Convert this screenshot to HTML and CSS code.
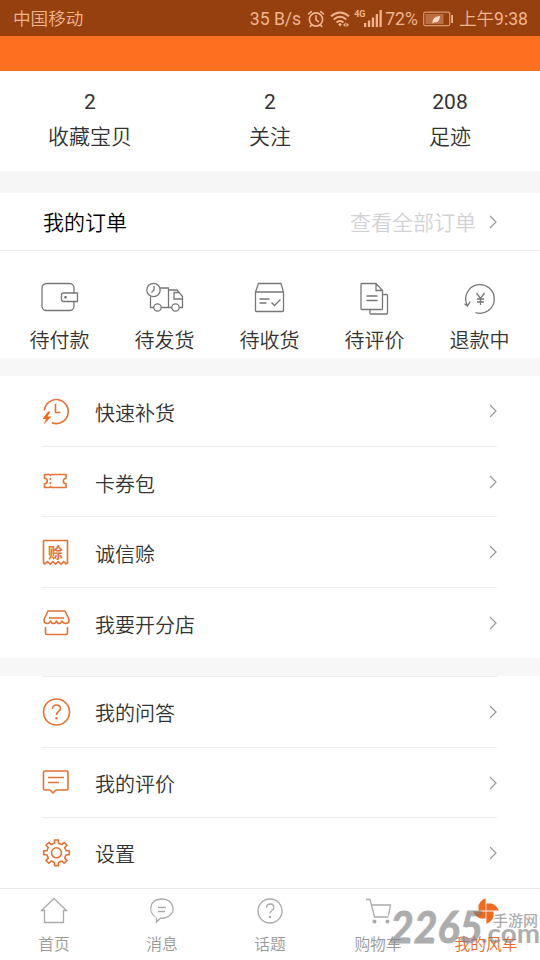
FILE: index.html
```html
<!DOCTYPE html>
<html lang="zh-CN">
<head>
<meta charset="utf-8">
<title>我的风车</title>
<link rel="stylesheet" href="styles.css">
</head>
<body>
<header class="status">
  <span class="carrier">中国移动</span>
  <span class="speed">35 B/s</span>
  <svg class="alarm" width="18" height="18" viewBox="0 0 18 18"><g fill="none" stroke="currentColor" stroke-width="1.6" stroke-linecap="round"><circle cx="9" cy="9.5" r="6.6"/><path d="M9 5.8v4l2.4 1.8M1.5 4 4.3 1.6M16.500 4 13.700 1.600M4.500 15 3.200 16.500M13.500 15l1.300 1.500"/></g></svg>
  <svg class="wifi" width="20" height="18" viewBox="0 0 20 18"><g fill="none" stroke="currentColor" stroke-width="1.900"><path d="M1 6.300Q10-1.300 19 6.300M3.700 9.500Q10 4 16.300 9.500M6.500 12.500Q10 9.600 13.500 12.500"/></g><path d="m8 14.300 2-1.400 2 1.400-2 2.300zM13 15l2.500-2.500V17zM16.500 12.500 19 15l-2.500 2z" fill="currentColor"/></svg>
  <span class="net">4G</span>
  <svg class="signal" width="18" height="17" viewBox="0 0 18 17"><path d="M0 13h2.300v4H0zM3.900 10.500h2.300V17H3.900zM7.800 7.500h2.300V17H7.800zM11.700 4H14v13h-2.300zM15.500 0h2.300v17h-2.300z" fill="currentColor"/></svg>
  <span class="percent">72%</span>
  <svg class="battery" width="31" height="16" viewBox="0 0 31 16"><rect x=".7" y="1.200" width="26" height="13.500" rx="1.500" fill="none" stroke="currentColor" stroke-width="1.200" opacity=".75"/><path d="M2.500 3h18v10h-18z" fill="currentColor" opacity=".4"/><path d="M9.500 12c0-4.500 2.500-6.500 7.500-7 0 4.500-2.500 7-6 6.200l-1 1.300z" fill="#ffdcc5"/><path d="M28.200 4h1.800v8h-1.800z" fill="currentColor"/></svg>
  <span class="time">上午9:38</span>
</header>
<div class="banner"></div>
<main>
<section class="stats">
  <div class="stat"><b>2</b><span>收藏宝贝</span></div>
  <div class="stat"><b>2</b><span>关注</span></div>
  <div class="stat"><b>208</b><span>足迹</span></div>
</section>
<section class="orders">
  <div class="orders-head">
    <h2>我的订单</h2><span class="all">查看全部订单</span>
    <svg class="chevron" width="8" height="14" viewBox="0 0 8 14"><path d="m1 1 6 6-6 6"/></svg>
  </div>
  <div class="order-grid">
    <div class="order"><svg class="line-icon" width="40" height="36" viewBox="0 0 40 36"><path d="M34 14.500V9a4.500 4.500 0 0 0-4.500-4.500H6.500A4.500 4.500 0 0 0 2 9v18a4.500 4.500 0 0 0 4.500 4.500h23A4.500 4.500 0 0 0 34 27v-4.500M37.500 14H23.500a2 2 0 0 0-2 2v4.500a2 2 0 0 0 2 2h14z"/><circle class="solid" cx="25.500" cy="18.200" r="1.200"/></svg><span>待付款</span></div>
    <div class="order"><svg class="line-icon" width="40" height="36" viewBox="0 0 40 36"><circle cx="8.500" cy="11" r="6.700"/><path d="M9 7v4l-2.500 2.500M15 9h8.500v19.500M5.500 17.500v11H9M16.500 28.500h10M34.500 28.500h3V17.500L32 11h-8.500M37.500 20H29v-6.500h5.500"/><circle cx="12.500" cy="28.500" r="3.700"/><circle cx="30.500" cy="28.500" r="3.700"/></svg><span>待发货</span></div>
    <div class="order"><svg class="line-icon" width="40" height="36" viewBox="0 0 40 36"><path d="M8.500 4.500h22.500l2.500 8.500v18.500a1 1 0 0 1-1 1H6.500a1 1 0 0 1-1-1V13zM5.500 13h28M9.500 20h10M9.500 24h7M21.500 23.500l3 3 6-6"/></svg><span>待收货</span></div>
    <div class="order"><svg class="line-icon" width="40" height="36" viewBox="0 0 40 36"><path d="M21 4.500H7a1 1 0 0 0-1 1v24a1 1 0 0 0 1 1H26.500a1 1 0 0 0 1-1V11.500zV11.500H27.500M11.500 17h11M11.500 21.500h11M27.500 15.500H31.500a1 1 0 0 1 1 1V34a1 1 0 0 1-1 1H16a1 1 0 0 1-1-1v-3.500"/></svg><span>待评价</span></div>
    <div class="order"><svg class="line-icon" width="40" height="36" viewBox="0 0 40 36"><path d="M7.300 26.500A14.300 14.300 0 1 1 15.500 33.500M4.500 24.800l3 2.200 2.700-4.500M16.500 14l4 5.500 4-5.500M20.500 19.500V26M17 20h7M17 23h7"/></svg><span>退款中</span></div>
  </div>
</section>
<section class="menu">
  <div class="row"><svg class="icon" width="32" height="32" viewBox="0 0 32 32"><path d="M4.300 15.500A12 12 0 1 1 12 27.800M15.500 9v8.500h5"/><path class="solid" d="M8 16.500 2.500 24H6l-2.500 5.500 8-8h-4l3-5z" stroke="none"/></svg><span>快速补货</span><svg class="chevron" width="8" height="14" viewBox="0 0 8 14"><path d="m1 1 6 6-6 6"/></svg></div>
  <div class="row"><svg class="icon" width="32" height="32" viewBox="0 0 32 32"><path d="M4.500 8.500h5l1 1 1-1h14.500v3.800a2.700 2.700 0 0 0 0 5.400v3.800H11.500l-1-1-1 1h-5v-3.800a2.700 2.700 0 0 0 0-5.400zM10.500 12v2M10.500 16v2"/></svg><span>卡券包</span><svg class="chevron" width="8" height="14" viewBox="0 0 8 14"><path d="m1 1 6 6-6 6"/></svg></div>
  <div class="row"><svg class="icon" width="32" height="32" viewBox="0 0 32 32"><path d="M3.500 27V4.500h24V27l-1.500 1-2.300-2.500-2.700 2.700-2.700-2.700-2.800 2.700-2.700-2.700-2.700 2.700-2.600-2.700L5 28z"/><text class="glyph" x="15.500" y="22">赊</text></svg><span>诚信赊</span><svg class="chevron" width="8" height="14" viewBox="0 0 8 14"><path d="m1 1 6 6-6 6"/></svg></div>
  <div class="row"><svg class="icon" width="32" height="32" viewBox="0 0 32 32"><path d="M8 4h17l4 8.500q.5 3.500-3 4-3 0-4-2.500-1 2.500-3 2.500T16.500 14q-1 2.500-3 2.500T10.500 14q-1 2.500-3.500 2.500-3.500-.5-3-4zM9 11h15M5.500 20v6A1.500 1.500 0 0 0 7 27.500h19a1.500 1.500 0 0 0 1.500-1.500v-6"/></svg><span>我要开分店</span><svg class="chevron" width="8" height="14" viewBox="0 0 8 14"><path d="m1 1 6 6-6 6"/></svg></div>
</section>
<section class="menu second">
  <div class="row"><svg class="icon" width="32" height="32" viewBox="0 0 32 32"><circle cx="16.500" cy="16" r="13"/><path d="M12.500 13q0-4 4-4t4 3.500c0 3-4 3-4 6.500"/><circle class="solid" cx="16.500" cy="22.300" r=".5"/></svg><span>我的问答</span><svg class="chevron" width="8" height="14" viewBox="0 0 8 14"><path d="m1 1 6 6-6 6"/></svg></div>
  <div class="row"><svg class="icon" width="32" height="32" viewBox="0 0 32 32"><path d="M5 4h21.500A1.500 1.500 0 0 1 28 5.500v16a1.500 1.500 0 0 1-1.500 1.500H16l-3 3-3-3H5a1.500 1.500 0 0 1-1.500-1.500v-16A1.500 1.500 0 0 1 5 4zM8 10.500h16M8 15.500h11"/></svg><span>我的评价</span><svg class="chevron" width="8" height="14" viewBox="0 0 8 14"><path d="m1 1 6 6-6 6"/></svg></div>
  <div class="row"><svg class="icon" width="32" height="32" viewBox="0 0 32 32"><path d="M14.500 3h4v3.200l3.300 1.400 2.300-2.300 2.900 2.900-2.300 2.300 1.400 3.300h3.200v4h-3.200l-1.400 3.300 2.300 2.300-2.900 2.900-2.300-2.300-3.300 1.400v3.200h-4v-3.200l-3.300-1.400-2.300 2.300L6 23.400l2.300-2.300-1.400-3.300H3.700v-4h3.200l1.400-3.300L6 8.200l2.900-2.900 2.300 2.300 3.300-1.400z"/><circle cx="16.500" cy="15.800" r="5"/></svg><span>设置</span><svg class="chevron" width="8" height="14" viewBox="0 0 8 14"><path d="m1 1 6 6-6 6"/></svg></div>
</section>
</main>
<nav class="tabs">
  <div class="tab"><svg width="28" height="28" viewBox="0 0 28 28"><path d="m14 1.500 12.500 12H23.500V25.500h-19v-12h-3z"/></svg><span>首页</span></div>
  <div class="tab"><svg width="28" height="28" viewBox="0 0 28 28"><path d="M7.500 20C0 15.500 1 2 14 2s15.500 16.500 2.500 19c-2 .4-3 .2-4 .2L8.500 25v-4.500M10 10.500h8M10 14.500h7"/></svg><span>消息</span></div>
  <div class="tab"><svg width="28" height="28" viewBox="0 0 28 28"><circle cx="14" cy="14" r="12"/><path d="M10.500 11q0-4 3.700-4t3.700 3.500c0 3-3.900 3-3.900 6"/><circle class="solid" cx="14" cy="20" r=".6"/></svg><span>话题</span></div>
  <div class="tab"><svg width="28" height="28" viewBox="0 0 28 28"><path d="M2 2.500h4l4.500 17.500h14M7.200 8H26.500l-2 10.500"/><circle class="solid" cx="10.500" cy="24.500" r="1.400"/><circle class="solid" cx="23.500" cy="24.500" r="1.400"/></svg><span>购物车</span></div>
  <div class="tab active"><svg width="28" height="28" viewBox="0 0 28 28"><defs><path id="petal" d="M13.600 13.600V1.200Q8 3.500 6.500 8.500V13.600z"/></defs><g class="petals"><use href="#petal"/><use href="#petal" transform="rotate(90 14 14)"/><use href="#petal" transform="rotate(180 14 14)"/><use href="#petal" transform="rotate(270 14 14)"/></g></svg><span>我的风车</span></div>
  <div class="watermark" aria-hidden="true"><svg width="156" height="48" viewBox="0 0 156 48"><text class="wm-num" x="6" y="36.500" textLength="93" lengthAdjust="spacingAndGlyphs">2265</text><text class="wm-cn" x="109" y="20" textLength="45">手游网</text><text class="wm-com" x="97" y="37" textLength="59" lengthAdjust="spacingAndGlyphs">.com</text></svg></div>
</nav>
</body>
</html>
```
FILE: styles.css
```css
* { box-sizing: border-box; }
body {
  margin: 0;
  width: 540px;
  height: 960px;
  overflow: hidden;
  display: flex;
  flex-direction: column;
  background: #fff;
  color: #333;
  font-family: Roboto, "Noto Sans CJK SC DemiLight", "Noto Sans CJK SC", sans-serif;
}
svg { display: block; flex: none; overflow: visible; }
.status {
  height: 36px;
  flex: none;
  display: flex;
  align-items: center;
  padding: 1px 12px 0 13px;
  background: #964010;
  color: #f0b48f;
  font-size: 17.6px;
  line-height: 36px;
  white-space: nowrap;
}
.speed { margin-left: auto; }
.alarm { margin-left: 6px; }
.wifi { margin-left: 5px; }
.net { align-self: flex-start; margin: -5px 0 0 4px; width: 10px; font-size: 9px; font-weight: 700; }
.signal { margin-left: 0; }
.percent { margin-left: 3px; }
.battery { margin-left: 5px; }
.time { margin-left: 5px; }
.banner { height: 35px; flex: none; background: #fe6f20; }
main { flex: none; height: 817px; }
.stats { display: flex; height: 100px; padding-top: 16px; }
.stat {
  flex: 1;
  display: flex;
  flex-direction: column;
  align-items: center;
  gap: 4px;
  font-size: 21px;
  line-height: 31px;
}
.stat b { font-weight: 400; }
.orders { border-top: 22px solid #f6f6f6; height: 187px; }
.orders-head {
  height: 58px;
  display: flex;
  align-items: center;
  padding: 0 43px;
  border-bottom: 1px solid #eee;
  font-size: 21px;
}
h2 { margin: 0; font-size: 21px; font-weight: 400; color: #000; }
h2, .all { margin-top: -1px; }
.all { margin-left: auto; margin-right: 13px; color: #d2d2d5; }
.chevron path { fill: none; stroke: #999; stroke-width: 1.2; }
.order-grid { display: flex; justify-content: space-between; padding: 28px 8px 0 7px; }
.order {
  width: 105px;
  display: flex;
  flex-direction: column;
  align-items: center;
  font-size: 20px;
  line-height: 30px;
  gap: 11px;
}
.line-icon { fill: none; stroke: #777; stroke-width: 1.3; }
.line-icon .solid { fill: #666; stroke: none; }
.menu { border-top: 18px solid #f7f7f7; height: 300px; padding: 0 43px 0 40px; }
.second { height: 230px; }
.row {
  position: relative;
  display: flex;
  align-items: center;
  height: 70.5px;
  font-size: 20px;
}
.row > span { margin: 3px auto 0 23px; }
.second .row > span { margin-top: 1px; }
.row::after {
  content: "";
  position: absolute;
  left: 2px;
  right: 0;
  bottom: 0;
  height: 1px;
  background: #eee;
}
.row:last-child::after { display: none; }
.second { padding-top: 1px; }
.second .row:first-child::before {
  content: "";
  position: absolute;
  left: 2px;
  right: 0;
  top: -1px;
  height: 1px;
  background: #eee;
}
.icon { fill: none; stroke: #e27235; stroke-width: 1.6; stroke-linejoin: round; }
.icon .solid { fill: #ef6a20; }
.icon .glyph {
  fill: #e27235;
  stroke: none;
  font-family: "Noto Sans CJK SC", sans-serif;
  font-size: 15px;
  font-weight: 700;
  text-anchor: middle;
}
.tabs {
  position: relative;
  height: 72px;
  flex: none;
  display: flex;
  border-top: 1px solid #e9e9e9;
  background: #fff;
}
.tab {
  flex: 1;
  display: flex;
  flex-direction: column;
  align-items: center;
  padding-top: 8px;
  gap: 8px;
  font-size: 15.75px;
  line-height: 24px;
  color: #999;
}
.tab svg { fill: none; stroke: #aaa; stroke-width: 1.3; }
.tab .solid { fill: #aaa; }
.tab .petals { fill: #f06a20; stroke: none; }
.tab.active { color: #e9682b; }
.watermark { position: absolute; right: 0; bottom: 6px; opacity: .62; }
.watermark text { fill: #7c7c7c; }
.wm-num { font: italic 700 43px Lato, sans-serif; stroke: #7c7c7c; stroke-width: 1; }
.wm-cn { font: 500 15px "Noto Sans CJK SC", sans-serif; }
.wm-com { font: 700 26px Lato, sans-serif; }
```
